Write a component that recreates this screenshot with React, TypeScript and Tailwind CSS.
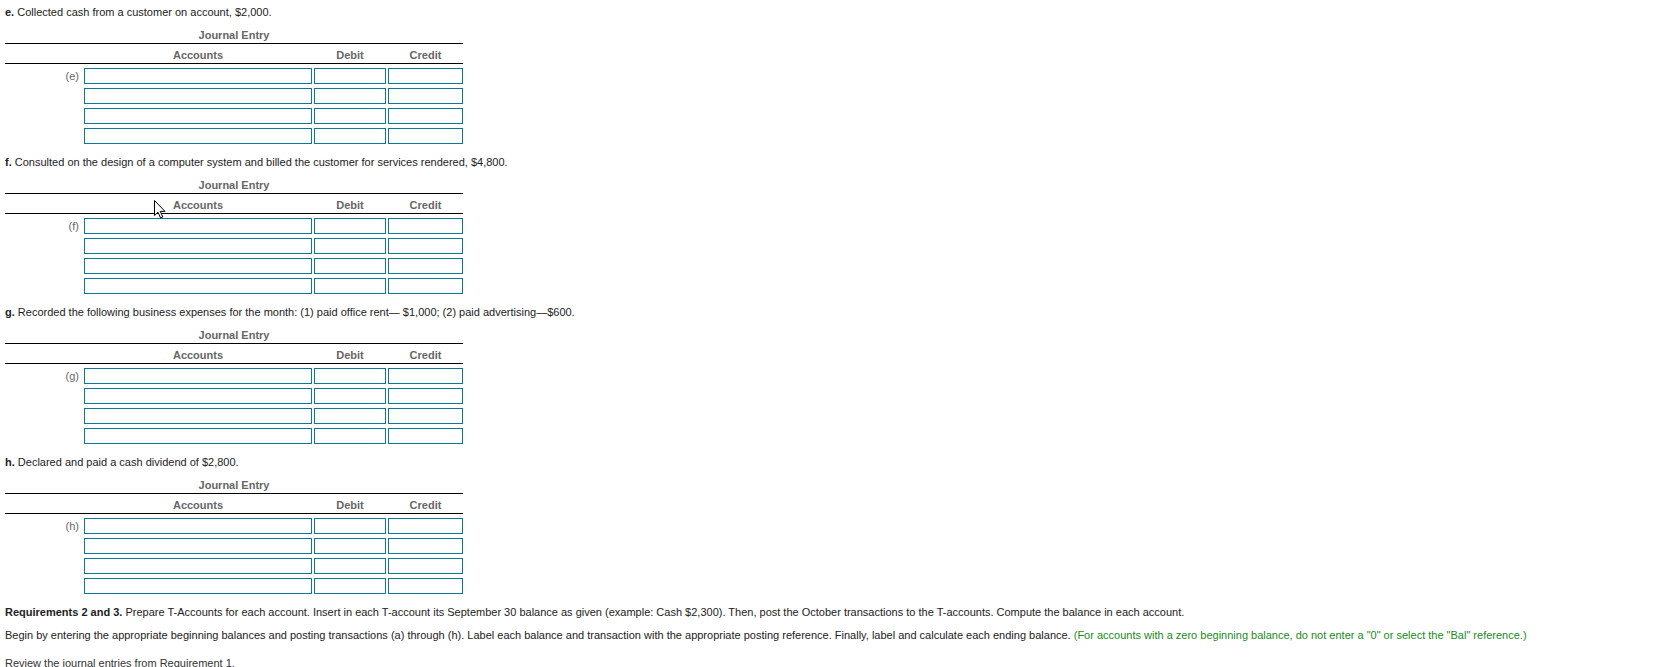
const sections = [
  { key: 'e', lead: 'e.', text: ' Collected cash from a customer on account, $2,000.' },
  {
    key: 'f',
    lead: 'f.',
    text: ' Consulted on the design of a computer system and billed the customer for services rendered, $4,800.',
  },
  {
    key: 'g',
    lead: 'g.',
    text: ' Recorded the following business expenses for the month: (1) paid office rent\u2014 $1,000; (2) paid advertising\u2014$600.',
  },
  { key: 'h', lead: 'h.', text: ' Declared and paid a cash dividend of $2,800.' },
];

const input = 'h-[16px] border border-[#0b7a98] bg-white';

function JournalTable({ label }: { label: string }) {
  return (
    <div className="w-[458px]">
      <div className="mt-[4px] text-center font-bold leading-[16px] text-[#666]">Journal Entry</div>
      <div className="h-px bg-black" />
      <div className="grid grid-cols-[77px_228px_72px_75px] gap-x-[2px] pt-[3px] font-bold leading-[16px] text-[#666]">
        <div />
        <div className="text-center">Accounts</div>
        <div className="text-center">Debit</div>
        <div className="text-center">Credit</div>
      </div>
      <div className="h-px bg-black" />
      <div className="mt-[4px] flex flex-col gap-[4px]">
        {[0, 1, 2, 3].map((i) => (
          <div key={i} className="grid grid-cols-[77px_228px_72px_75px] gap-x-[2px]">
            <div className="pr-[3px] text-right leading-[16px] text-[#666]">{i === 0 ? `(${label})` : ''}</div>
            <div className={input} />
            <div className={input} />
            <div className={input} />
          </div>
        ))}
      </div>
    </div>
  );
}

export default function App() {
  return (
    <div
      className="relative min-h-screen bg-white pl-[5px] pt-[1px] text-[11px] text-[#222]"
      style={{ fontFamily: '"Liberation Sans", Arial, sans-serif' }}
    >
      {sections.map((s) => (
        <div key={s.key} className="mb-[7px]">
          <p className="leading-[22px]">
            <span className="font-bold">{s.lead}</span>
            {s.text}
          </p>
          <JournalTable label={s.key} />
        </div>
      ))}

      <div className="mt-[3px]">
        <p className="leading-[22px]">
          <span className="font-bold">Requirements 2 and 3.</span> Prepare T-Accounts for each account. Insert in each
          T-account its September 30 balance as given (example: Cash $2,300). Then, post the October transactions to
          the T-accounts. Compute the balance in each account.
        </p>
        <p className="mt-[1px] leading-[22px]">
          Begin by entering the appropriate beginning balances and posting transactions (a) through (h). Label each
          balance and transaction with the appropriate posting reference. Finally, label and calculate each ending
          balance.{' '}
          <span className="text-[#1a8a1a]">
            (For accounts with a zero beginning balance, do not enter a "0" or select the "Bal" reference.)
          </span>
        </p>
        <p className="mt-[6px] leading-[22px] text-[#333]">Review the journal entries from Requirement 1.</p>
      </div>

      {/* mouse pointer */}
      <svg className="absolute left-[154px] top-[200px]" width="13" height="19" viewBox="0 0 13 19">
        <path
          d="M0.5 0.5 L0.5 15.5 L4 12.2 L6.6 18 L8.8 17 L6.3 11.4 L11 11.4 Z"
          fill="#fff"
          stroke="#000"
          strokeWidth="1"
          strokeLinejoin="miter"
        />
      </svg>
    </div>
  );
}
